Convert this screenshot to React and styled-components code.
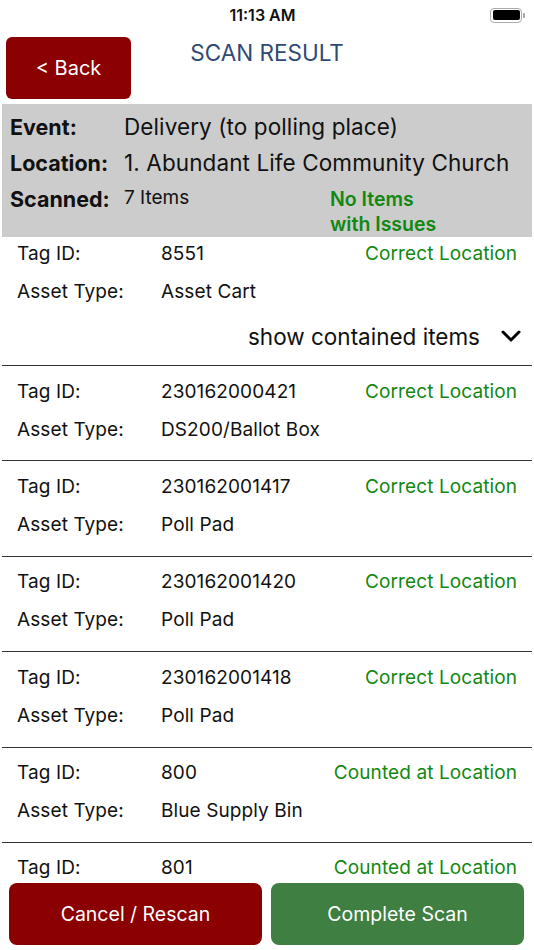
import React from "react";
import styled, { createGlobalStyle } from "styled-components";

const Global = createGlobalStyle`
  html, body { margin: 0; padding: 0; background: #fff; }
  body { font-family: Inter, "Liberation Sans", Arial, sans-serif; color: #111; }
`;

const Screen = styled.div`
  width: 534px;
  height: 950px;
  display: flex;
  flex-direction: column;
  overflow: hidden;
  background: #fff;
`;

const StatusBar = styled.div`
  height: 30px;
  display: grid;
  grid-template-columns: 1fr auto 1fr;
  align-items: center;
  padding: 0 9px 0 0;
  font-size: 16px;
  font-weight: 600;
`;

const Time = styled.div`
  grid-column: 2;
`;

const Battery = styled.div`
  justify-self: end;
  display: flex;
  align-items: center;
  gap: 1px;
`;

const BatteryBody = styled.div`
  width: 27px;
  height: 10px;
  border: 1.5px solid #aaa;
  border-radius: 4px;
  padding: 1.5px;
  display: flex;
`;

const BatteryFill = styled.div`
  flex: 1;
  background: #000;
  border-radius: 2px;
`;

const BatteryTip = styled.div`
  width: 2px;
  height: 5px;
  background: #aaa;
  border-radius: 0 1px 1px 0;
`;

const Header = styled.div`
  height: 74px;
  display: grid;
  grid-template-columns: 125px 1fr 125px;
  padding: 7px 6px 0 6px;
  box-sizing: border-box;
`;

const BackButton = styled.button`
  width: 125px;
  height: 62px;
  background: #8b0000;
  color: #fff;
  border: none;
  border-radius: 6px;
  font-family: inherit;
  font-size: 20px;
  padding: 0;
`;

const Title = styled.div`
  text-align: center;
  color: #2f4a73;
  font-size: 22.5px;
  padding-top: 2px;
`;

const Summary = styled.div`
  margin: 0 2px;
  background: #cccccc;
  padding: 5px 8px 0 8px;
  height: 133px;
  box-sizing: border-box;
  display: flex;
  flex-direction: column;
`;

const SummaryRow = styled.div`
  display: grid;
  grid-template-columns: 114px 1fr;
  height: 36px;
  align-items: start;
`;

const SumLabel = styled.div`
  font-weight: 700;
  font-size: 21.5px;
  line-height: 36px;
`;

const SumValue = styled.div`
  font-size: 22.5px;
  line-height: 36px;
  white-space: nowrap;
  letter-spacing: 0.1px;
`;

const ScannedValue = styled.div`
  display: grid;
  grid-template-columns: 206px 1fr;
  font-size: 19px;
  padding-top: 5px;
`;

const IssuesNote = styled.div`
  color: #118811;
  font-weight: 600;
  font-size: 19.5px;
  line-height: 25px;
  margin-top: 1px;
`;

const List = styled.div`
  flex: 1;
  overflow: hidden;
  min-height: 0;
`;

const Item = styled.div`
  margin: ${(p) => (p.$first ? "-3px 2px 0" : "0 2px")};
  padding: ${(p) => (p.$first ? "0" : "6px")} 15px 0 15px;
  height: ${(p) => p.$h}px;
  box-sizing: border-box;
  border-bottom: ${(p) => (p.$last ? "none" : "1.5px solid #333")};
`;

const Row = styled.div`
  display: grid;
  grid-template-columns: 144px 1fr auto;
  height: 38px;
  align-items: center;
  font-size: 19px;
  letter-spacing: 0.1px;
`;

const Status = styled.div`
  color: #118811;
  text-align: right;
`;

const Expand = styled.div`
  display: flex;
  justify-content: flex-end;
  align-items: center;
  gap: 20px;
  height: 52px;
  font-size: 22.5px;
  margin-right: -5px;
`;

const Footer = styled.div`
  display: grid;
  grid-template-columns: 1fr 1fr;
  gap: 9px;
  padding: 0 10px 5px 9px;
  height: 67px;
  box-sizing: border-box;
`;

const ActionButton = styled.button`
  border: none;
  border-radius: 8px;
  background: ${(p) => p.$bg};
  color: #fff;
  font-family: inherit;
  font-size: 19.5px;
  height: 62px;
`;

const Chevron = () => (
  <svg width="22" height="14" viewBox="0 0 22 14" fill="none">
    <path d="M3 3l8 8 8-8" stroke="#000" strokeWidth="3" strokeLinecap="round" strokeLinejoin="round" />
  </svg>
);

const items = [
  { id: "230162000421", type: "DS200/Ballot Box", status: "Correct Location" },
  { id: "230162001417", type: "Poll Pad", status: "Correct Location" },
  { id: "230162001420", type: "Poll Pad", status: "Correct Location" },
  { id: "230162001418", type: "Poll Pad", status: "Correct Location" },
  { id: "800", type: "Blue Supply Bin", status: "Counted at Location" },
  { id: "801", status: "Counted at Location" },
];

export default function App() {
  return (
    <Screen>
      <Global />
      <StatusBar>
        <Time>11:13 AM</Time>
        <Battery>
          <BatteryBody>
            <BatteryFill />
          </BatteryBody>
          <BatteryTip />
        </Battery>
      </StatusBar>
      <Header>
        <BackButton>&lt; Back</BackButton>
        <Title>SCAN RESULT</Title>
      </Header>
      <Summary>
        <SummaryRow>
          <SumLabel>Event:</SumLabel>
          <SumValue>Delivery (to polling place)</SumValue>
        </SummaryRow>
        <SummaryRow>
          <SumLabel>Location:</SumLabel>
          <SumValue>1. Abundant Life Community Church</SumValue>
        </SummaryRow>
        <SummaryRow>
          <SumLabel>Scanned:</SumLabel>
          <ScannedValue>
            <span>7 Items</span>
            <IssuesNote>
              No Items
              <br />
              with Issues
            </IssuesNote>
          </ScannedValue>
        </SummaryRow>
      </Summary>
      <List>
        <Item $first $h={132}>
          <Row>
            <span>Tag ID:</span>
            <span>8551</span>
            <Status>Correct Location</Status>
          </Row>
          <Row>
            <span>Asset Type:</span>
            <span>Asset Cart</span>
          </Row>
          <Expand>
            <span>show contained items</span>
            <Chevron />
          </Expand>
        </Item>
        {items.map((it) => (
          <Item key={it.id} $h={95.4} $last={!it.type}>
            <Row>
              <span>Tag ID:</span>
              <span>{it.id}</span>
              <Status>{it.status}</Status>
            </Row>
            {it.type && (
              <Row>
                <span>Asset Type:</span>
                <span>{it.type}</span>
              </Row>
            )}
          </Item>
        ))}
      </List>
      <Footer>
        <ActionButton $bg="#8b0000">Cancel / Rescan</ActionButton>
        <ActionButton $bg="#3f7f41">Complete Scan</ActionButton>
      </Footer>
    </Screen>
  );
}
